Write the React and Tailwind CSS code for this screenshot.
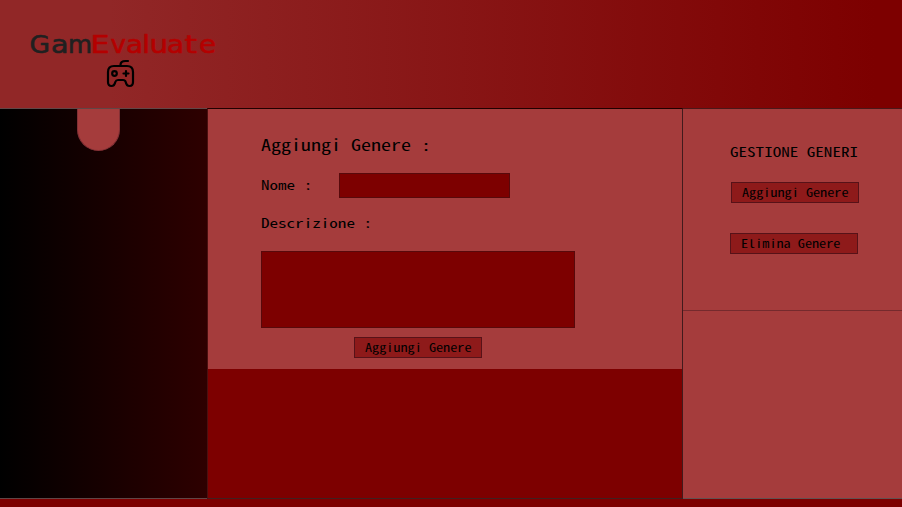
const mono = "font-['Noto_Sans_Mono_CJK_SC','Noto_Sans_Mono_CJK_JP','DejaVu_Sans_Mono',monospace]";

const letters = [
  ["G", 8.5, 20.5, "#202020"],
  ["a", 30, 17.5, "#202020"],
  ["m", 47, 24, "#202020"],
  ["E", 69.5, 19, "#b40000"],
  ["v", 89.5, 15.5, "#b40000"],
  ["a", 105, 17, "#b40000"],
  ["l", 121, 8, "#b40000"],
  ["u", 128.5, 18.5, "#b40000"],
  ["a", 146, 17, "#b40000"],
  ["t", 163.5, 12.5, "#b40000"],
  ["e", 178, 17, "#b40000"],
];

function Logo() {
  return (
    <svg width="220" height="70" viewBox="0 0 220 70" className="block">
      <g fontFamily="'DejaVu Sans', sans-serif" fontSize="24" strokeWidth="0.6" strokeLinejoin="round">
        {letters.map(([c, x, w, color], i) => (
          <text key={i} x={x} y="28" fill={color} stroke={color} textLength={w} lengthAdjust="spacingAndGlyphs">{c}</text>
        ))}
      </g>
      <g fill="none" stroke="#000" strokeWidth="2.2" strokeLinecap="round" strokeLinejoin="round">
        <path d="M93 41h13q6 0 6 6v10q0 4-3.5 4-3 0-3.800-4-.6-2-2.700-2h-5q-2 0-2.700 2-.8 4-3.800 4-3.500 0-3.500-4V47q0-6 6-6z" />
        <path d="M99.500 41v-1q0-4 5-4h2.500" />
        <circle cx="93.500" cy="48.500" r="2.300" />
        <path d="M102.500 48.500h5M105 46v5" />
      </g>
    </svg>
  );
}

function MonoText({ children, width, size, height, baseline, heavy = false }) {
  return (
    <svg width={width} height={height} className={`block shrink-0 overflow-visible ${mono}`}>
      <text x="0" y={baseline} fontSize={size} stroke="#000" strokeWidth={heavy ? 0.3 : 0} textLength={width} lengthAdjust="spacingAndGlyphs">
        {children}
      </text>
    </svg>
  );
}

function ActionButton({ children, className = "" }) {
  return (
    <button className={`flex h-[21px] w-[128px] items-center border border-[#571218] bg-[#8e1a1a] pl-2.5 text-left leading-none whitespace-pre ${className}`}>
      <MonoText width={children.length * 7.1} size={11.2} height={19} baseline={14}>{children}</MonoText>
    </button>
  );
}

export default function App() {
  return (
    <div className={`flex h-[507px] w-[902px] flex-col overflow-hidden bg-[#7d0000] text-black ${mono}`}>
      <header className="h-[108px] shrink-0 bg-linear-to-r/srgb from-[#912727] from-12% to-[#7d0000] to-97% pt-[25px] pl-[21px]">
        <Logo />
      </header>
      <main className="flex h-[391px] shrink-0">
        <aside className="flex w-[207px] shrink-0 justify-center border-y border-[#614646] bg-linear-to-r/srgb from-black to-[#2e0000] pr-[10px]">
          <div className="h-[42px] w-[43px] rounded-b-full border border-t-0 border-[#833035] bg-[#a53c3c]" />
        </aside>
        <section className="w-[476px] shrink-0 border border-t-[#210000] border-r-[#421a1c] border-b-[#402020] border-l-[#4b1010]">
          <form className="h-[260px] bg-[#a53c3c] pt-[26px] pl-[53px]">
            <h1><MonoText width={170} size={15.4} height={24} baseline={16}>Aggiungi Genere :</MonoText></h1>
            <div className="mt-[14px] flex h-[25px] items-center">
              <label className="w-[78px]"><MonoText width={51.2} size={13} height={22} baseline={15}>Nome :</MonoText></label>
              <input aria-label="Nome" className="h-[25px] w-[171px] border border-[#58090b] bg-[#7d0000] outline-none" />
            </div>
            <label className="mt-[15px] block"><MonoText width={111} size={13} height={22} baseline={15}>Descrizione :</MonoText></label>
            <textarea aria-label="Descrizione" className="mt-[16px] block h-[77px] w-[314px] resize-none border border-[#58090b] bg-[#7d0000] outline-none" />
            <ActionButton className="mt-[9px] ml-[93px]">Aggiungi Genere</ActionButton>
          </form>
        </section>
        <aside className="flex flex-1 flex-col border-y border-t-[#4b1719] border-b-[#625050] bg-[#a53c3c]">
          <div className="h-[202px] border-b border-[#752a2d] pt-[33px] pl-[47px]">
            <h2><MonoText width={128} size={13} height={22} baseline={15}>GESTIONE GENERI</MonoText></h2>
            <ActionButton className="mt-[18px] ml-px">Aggiungi Genere</ActionButton>
            <ActionButton className="mt-[30px]">Elimina Genere</ActionButton>
          </div>
        </aside>
      </main>
    </div>
  );
}
